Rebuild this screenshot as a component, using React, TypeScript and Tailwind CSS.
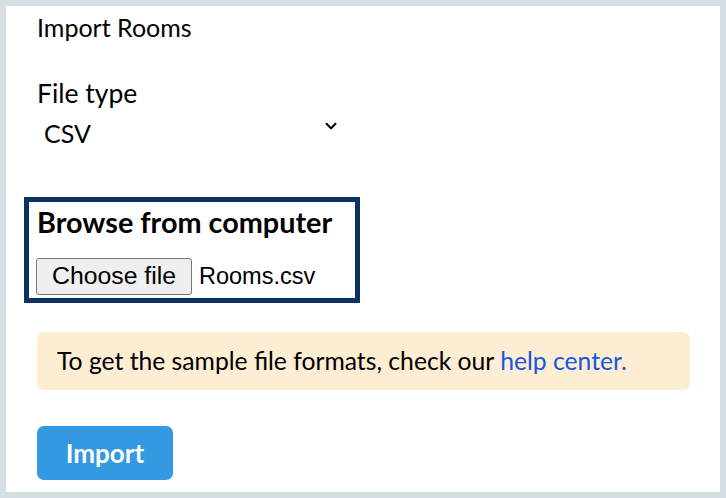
import { ChevronDown } from "lucide-react";

export default function App() {
  return (
    <div className="h-[498px] w-[726px] bg-[#d5dee3] p-[6px] font-['Lato',sans-serif] text-black">
      <div className="flex h-full flex-col items-start bg-white pl-[31px] pr-[30px]">
        <h1 className="mt-[6px] text-[25px] leading-[30px]">Import Rooms</h1>

        <label className="mt-[36px] text-[26.5px] leading-[31px]">File type</label>
        <div className="mt-[9px] flex w-[303px] items-start justify-between pl-[7px]">
          <span className="text-[25px] leading-[30px]">CSV</span>
          <ChevronDown size={18} strokeWidth={2.6} className="-mt-[1px]" />
        </div>

        <div className="ml-[-13px] mt-[49px] border-[5px] border-[#0b3262] pb-[3px] pl-[7px] pr-[23px] pt-[3px]">
          <p className="ml-[1px] text-[28.8px] font-bold leading-[35px]">Browse from computer</p>
          <div className="mt-[18px] flex items-center gap-[7px] font-['Liberation_Sans',Arial,sans-serif] text-[23.5px]">
            <button className="h-[37px] w-[156px] rounded-[3px] border border-[#767676] bg-[#efefef] text-[24.8px] leading-none text-black">
              Choose file
            </button>
            <span>Rooms.csv</span>
          </div>
        </div>

        <div className="mt-[29px] flex h-[58px] w-full items-center rounded-[7px] bg-[#fdedd3] px-[20px] text-[24.7px]">
          <p>
            To get the sample file formats, check our{" "}
            <a className="text-[#1556e0]" href="#">
              help center.
            </a>
          </p>
        </div>

        <button className="mt-[36px] h-[54px] w-[136px] rounded-[7px] bg-[#3399e0] text-[26px] font-bold text-white">
          Import
        </button>
      </div>
    </div>
  );
}
